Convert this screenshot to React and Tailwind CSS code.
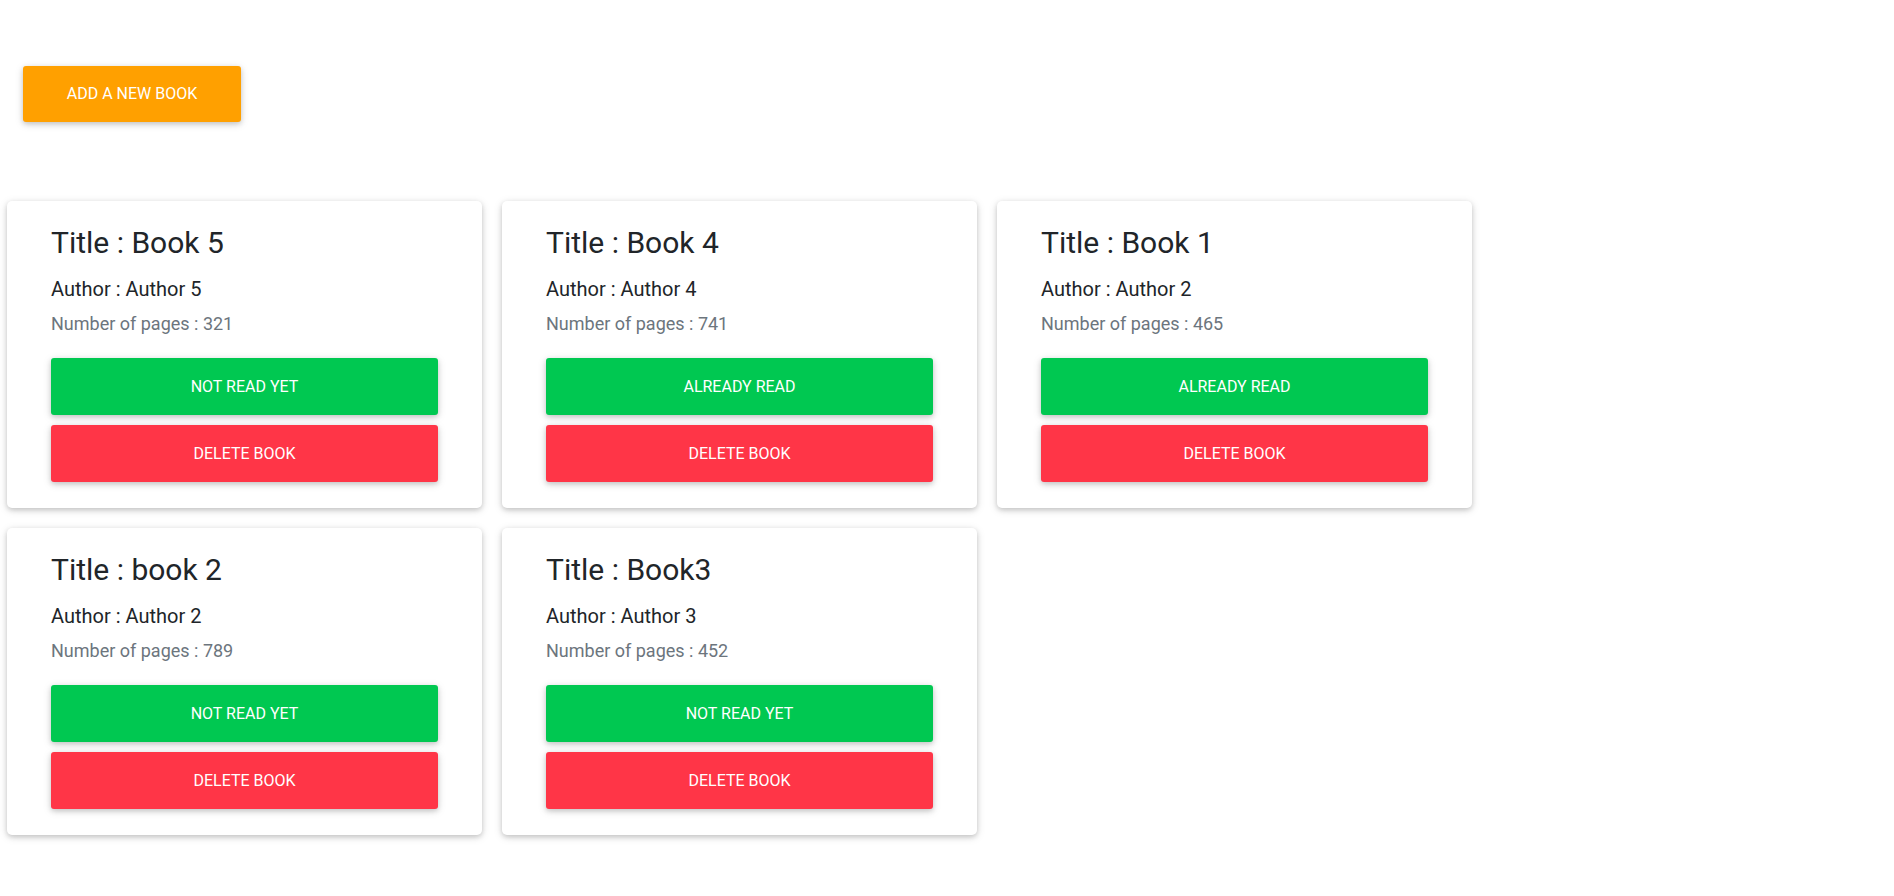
import React from "react";

const books = [
  { title: "Book 5", author: "Author 5", pages: 321, read: false },
  { title: "Book 4", author: "Author 4", pages: 741, read: true },
  { title: "Book 1", author: "Author 2", pages: 465, read: true },
  { title: "book 2", author: "Author 2", pages: 789, read: false },
  { title: "Book3", author: "Author 3", pages: 452, read: false },
];

const shadow = "shadow-[0_2px_5px_0_rgba(0,0,0,0.16),0_2px_10px_0_rgba(0,0,0,0.12)]";

function Card({ b }) {
  return (
    <div className={`w-[475px] bg-white rounded-[5px] pt-[24px] pb-[26px] px-[44px] flex flex-col ${shadow}`}>
      <div className="text-[30px] leading-[36px] text-[#212529] h-[36px]">Title : {b.title}</div>
      <div className="mt-[13px] text-[20px] leading-[30px] text-[#212529]">Author : {b.author}</div>
      <div className="mt-[5px] text-[18px] leading-[30px] text-[#6c757d]">Number of pages : {b.pages}</div>
      <button className={`mt-[19px] h-[57px] w-full rounded-[3px] bg-[#00c851] text-white text-[16px] uppercase flex items-center justify-center ${shadow}`}>
        {b.read ? "Already read" : "Not read yet"}
      </button>
      <button className={`mt-[10px] h-[57px] w-full rounded-[3px] bg-[#ff3547] text-white text-[16px] uppercase flex items-center justify-center ${shadow}`}>
        Delete book
      </button>
    </div>
  );
}

export default function App() {
  return (
    <div className="min-h-screen bg-white font-['Roboto',sans-serif]">
      <div className="pt-[66px] pl-[23px]">
        <button className={`w-[218px] h-[56px] rounded-[3px] bg-[#ffa000] text-white text-[16px] uppercase flex items-center justify-center ${shadow}`}>
          Add a new book
        </button>
      </div>
      <div className="mt-[79px] pl-[7px] flex flex-wrap gap-[20px] w-[1500px]">
        {books.map((b, i) => (
          <Card key={i} b={b} />
        ))}
      </div>
    </div>
  );
}
